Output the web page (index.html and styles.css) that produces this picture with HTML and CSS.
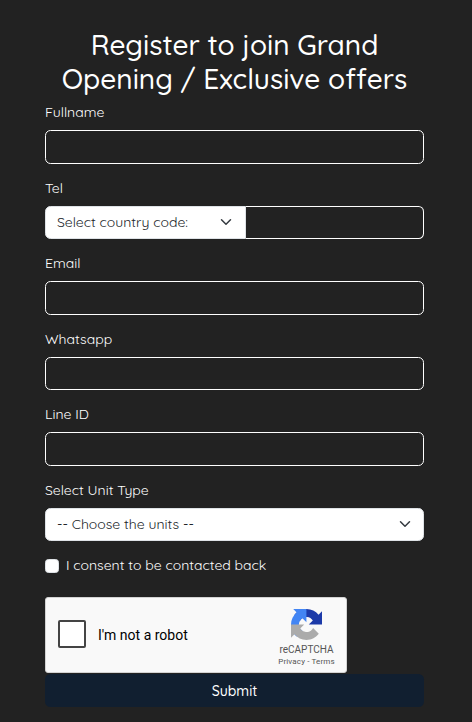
FILE: index.html
```html
<!DOCTYPE html>
<html lang="en">
<head>
  <meta charset="UTF-8">
  <meta name="viewport" content="width=device-width, initial-scale=1.0">
  <title>Register</title>
  <link rel="stylesheet" href="styles.css">
</head>
<body>
  <form class="register-form">
    <h1>Register to join Grand<br>Opening / Exclusive offers</h1>

    <div class="field">
      <label for="fullname">Fullname</label>
      <input type="text" id="fullname" class="form-control">
    </div>
    <div class="field">
      <label for="tel">Tel</label>
      <div class="input-group">
        <div class="form-select country-code">
          <span>Select country code:</span>
          <svg class="chevron" viewBox="0 0 16 16"><path d="m2 5 6 6 6-6"/></svg>
        </div>
        <input type="tel" id="tel" class="form-control">
      </div>
    </div>
    <div class="field">
      <label for="email">Email</label>
      <input type="text" id="email" class="form-control">
    </div>
    <div class="field">
      <label for="whatsapp">Whatsapp</label>
      <input type="text" id="whatsapp" class="form-control">
    </div>
    <div class="field">
      <label for="line">Line ID</label>
      <input type="text" id="line" class="form-control">
    </div>
    <div class="field">
      <label>Select Unit Type</label>
      <div class="form-select">
        <span>-- Choose the units --</span>
        <svg class="chevron" viewBox="0 0 16 16"><path d="m2 5 6 6 6-6"/></svg>
      </div>
    </div>

    <div class="consent">
      <input type="checkbox" id="consent">
      <label for="consent">I consent to be contacted back</label>
    </div>

    <div class="captcha">
      <div class="captcha-box"></div>
      <div class="captcha-label">I'm not a robot</div>
      <div class="captcha-brand">
        <svg class="captcha-logo" viewBox="0 0 64 64">
          <path fill="#1c3aa9" d="M64 31.955l-.012-1.376V4.687l-7.158 7.158C50.972 4.674 42.055.093 32.067.093c-10.394 0-19.628 4.961-25.458 12.644l11.733 11.856a15.55 15.55 0 0 1 4.754-5.334c2.05-1.6 4.955-2.908 8.971-2.908.485 0 .86.057 1.135.164 4.976.393 9.288 3.14 11.828 7.124l-8.305 8.305L64 31.955"/>
          <path fill="#4285f4" d="M31.862.094l-1.376.012H4.594l7.158 7.158C4.581 13.122 0 22.039 0 32.027c0 10.394 4.961 19.628 12.644 25.458L24.5 45.752a15.55 15.55 0 0 1-5.334-4.754c-1.6-2.05-2.908-4.955-2.908-8.971 0-.485.057-.86.164-1.135.393-4.976 3.14-9.288 7.124-11.828l8.305 8.305L31.862.094"/>
          <path fill="#ababab" d="M.001 32.033l.012 1.376v25.892l7.158-7.158c5.858 7.171 14.775 11.752 24.763 11.752 10.394 0 19.628-4.961 25.458-12.644L45.66 39.395a15.55 15.55 0 0 1-4.754 5.334c-2.05 1.6-4.955 2.908-8.971 2.908-.485 0-.86-.057-1.135-.164-4.976-.393-9.288-3.14-11.828-7.124l8.305-8.305L.001 32.033"/>
        </svg>
        <div class="captcha-name">reCAPTCHA</div>
        <div class="captcha-links">Privacy - Terms</div>
      </div>
    </div>

    <button type="button" class="btn-submit">Submit</button>
  </form>
</body>
</html>
```

FILE: styles.css
```css
* {
  box-sizing: border-box;
}

body {
  margin: 0;
  background-color: #222;
  color: #fff;
  font-family: Quicksand, Lato, sans-serif;
  font-size: 14px;
}

.register-form {
  width: 379px;
  margin-left: 45px;
  padding-top: 27.5px;
}

h1 {
  margin: 0 -20px 6.8px;
  font-size: 28px;
  font-weight: 500;
  line-height: 34px;
  text-align: center;
  white-space: nowrap;
}

/* Fields */
.field {
  margin-bottom: 14.1px;
}
.field label {
  display: block;
  height: 21px;
  margin-bottom: 7px;
  line-height: 21px;
}
.form-control {
  display: block;
  width: 100%;
  height: 33.4px;
  padding: 5px 11px;
  border: 1px solid #fff;
  border-radius: 5.5px;
  background: transparent;
  color: #fff;
  font: inherit;
}
.input-group {
  display: flex;
}
.input-group .form-control {
  flex: 1;
  min-width: 0;
  border-left: none;
  border-radius: 0 5.5px 5.5px 0;
}
.form-select {
  display: flex;
  align-items: center;
  justify-content: space-between;
  height: 33.4px;
  padding: 0 12px 1px 11px;
  border: 1px solid #dee2e6;
  border-radius: 5.5px;
  background: #fff;
  color: #212529;
}
.country-code {
  width: 201px;
  padding-right: 13px;
  border-radius: 5.5px 0 0 5.5px;
}
.chevron {
  width: 12px;
  height: 12px;
  margin-top: 1px;
  fill: none;
  stroke: #343a40;
  stroke-width: 2;
  stroke-linecap: round;
  stroke-linejoin: round;
}

/* Consent */
.consent {
  display: flex;
  align-items: center;
  height: 21px;
}
.consent input {
  appearance: none;
  width: 14px;
  height: 14px;
  margin: 0 7px 0 0;
  border: 1px solid #dee2e6;
  border-radius: 3.5px;
  background: #fff;
}
.consent label {
  margin-top: -2px;
}

/* Captcha */
.captcha {
  display: flex;
  align-items: center;
  width: 302px;
  height: 76px;
  margin-top: 20.9px;
  padding-left: 12px;
  border: 1px solid #d3d3d3;
  border-radius: 3px;
  background: #f9f9f9;
  color: #000;
  font-family: Roboto, sans-serif;
}
.captcha-box {
  width: 28px;
  height: 28px;
  margin: -2px 12px 0 0;
  border: 2px solid #444;
  border-radius: 2px;
  background: #fff;
}
.captcha-label {
  font-size: 14px;
}
.captcha-brand {
  display: flex;
  flex-direction: column;
  align-items: center;
  width: 79px;
  margin: 7px 0 0 auto;
  color: #555;
}
.captcha-logo {
  width: 31px;
  height: 31px;
}
.captcha-name {
  margin-top: 3px;
  font-size: 10px;
  line-height: 13px;
}
.captcha-links {
  font-size: 8px;
  line-height: 12px;
  letter-spacing: 0.15px;
}

.btn-submit {
  display: block;
  width: 100%;
  height: 33px;
  margin-top: 1.1px;
  border: none;
  border-radius: 5.5px;
  background: #111f30;
  color: #fff;
  font: inherit;
  font-weight: 500;
}
```
